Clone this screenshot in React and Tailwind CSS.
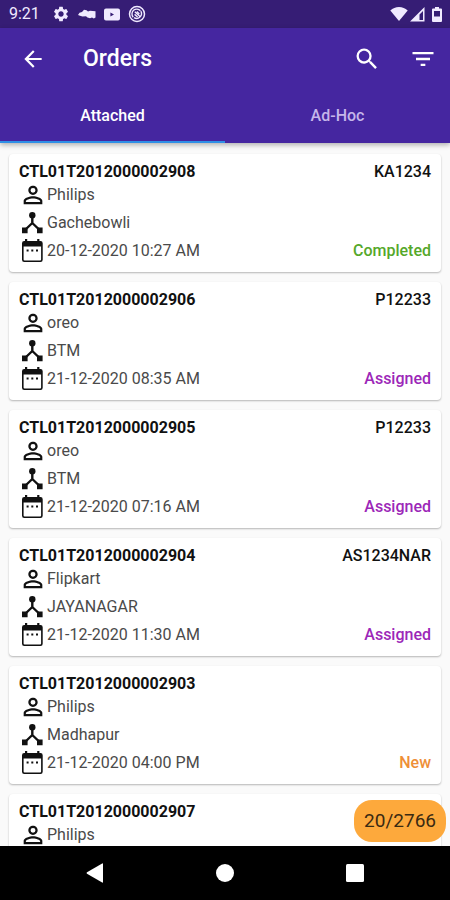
import React, { useState } from "react";
import {
  MdArrowBack,
  MdFilterList,
  MdPersonOutline,
  MdSearch,
  MdSettings,
} from "react-icons/md";

const orders = [
  {
    id: "CTL01T2012000002908",
    vehicle: "KA1234",
    customer: "Philips",
    hub: "Gachebowli",
    date: "20-12-2020 10:27 AM",
    status: "Completed",
  },
  {
    id: "CTL01T2012000002906",
    vehicle: "P12233",
    customer: "oreo",
    hub: "BTM",
    date: "21-12-2020 08:35 AM",
    status: "Assigned",
  },
  {
    id: "CTL01T2012000002905",
    vehicle: "P12233",
    customer: "oreo",
    hub: "BTM",
    date: "21-12-2020 07:16 AM",
    status: "Assigned",
  },
  {
    id: "CTL01T2012000002904",
    vehicle: "AS1234NAR",
    customer: "Flipkart",
    hub: "JAYANAGAR",
    date: "21-12-2020 11:30 AM",
    status: "Assigned",
  },
  {
    id: "CTL01T2012000002903",
    vehicle: "",
    customer: "Philips",
    hub: "Madhapur",
    date: "21-12-2020 04:00 PM",
    status: "New",
  },
  {
    id: "CTL01T2012000002907",
    vehicle: "",
    customer: "Philips",
    hub: "",
    date: "",
    status: "",
  },
];

const statusColors = {
  Completed: "text-[#55a82a]",
  Assigned: "text-[#9c27b8]",
  New: "text-[#ee8f38]",
};

const tabs = ["Attached", "Ad-Hoc"];

const HubIcon = () => (
  <svg viewBox="1 0 28 28" className="size-7 text-[#111]" fill="currentColor">
    <circle cx="14.3" cy="6.3" r="3.2" />
    <path
      d="M14.3 7V14.5M14.3 14L7 21M14.3 14L21.6 21"
      fill="none"
      stroke="currentColor"
      strokeWidth="2.4"
    />
    <path d="M4 18.6H9.6V24.2H4ZM19 18.6H24.6V24.2H19Z" />
  </svg>
);

const CalendarIcon = () => (
  <svg viewBox="1 0 28 28" className="size-7 text-[#111]" fill="currentColor">
    <path
      fillRule="evenodd"
      d="M7 2H9.2V4H19.2V2H21.4V4H22.5Q24.7 4 24.7 6.2V22.8Q24.7 25 22.5 25H6.2Q4 25 4 22.8V6.2Q4 4 6.2 4H7ZM5.6 9.6V22.4Q5.6 23.4 6.6 23.4H22.1Q23.1 23.4 23.1 22.4V9.6Z"
    />
    <path d="M8.6 12.4H10.6V14.4H8.6ZM13.3 12.4H15.3V14.4H13.3ZM18 12.4H20V14.4H18Z" />
  </svg>
);

const StatusBar = () => (
  <div className="flex h-7 shrink-0 items-center justify-between bg-[#361d75] pl-[9px] pr-2 text-[#f0eaff]">
    <div className="flex items-center gap-2">
      <span className="mr-1 text-base">9:21</span>
      <MdSettings className="size-[18px]" />
      <svg viewBox="0 0 18 12" className="h-3 w-[18px]" fill="currentColor">
        <path d="M0 7 1.5 4.8 4 4 6 1.8 8.5 2.2 10 3.6 12 2.8 17.5 3.2V9.6L15.8 10.4 14 9.6 12 10.2 9.5 9.4 8 8.2 4.5 8.6 2 7.8Z" />
      </svg>
      <svg viewBox="0 0 16 13" className="h-[13px] w-4" fill="currentColor">
        <path
          fillRule="evenodd"
          d="M2 0.5H14Q16 0.5 16 2.5V10.5Q16 12.5 14 12.5H2Q0 12.5 0 10.5V2.5Q0 0.5 2 0.5ZM6.4 4.6V8.4L10 6.5Z"
        />
      </svg>
      <svg
        viewBox="0 0 18 18"
        className="size-[18px]"
        fill="none"
        stroke="currentColor"
      >
        <circle cx="9" cy="9" r="7.5" strokeWidth="1.5" />
        <path
          d="M5.2 12.2A4.8 4.8 0 0 1 12.4 5.7M12.8 6.2A4.8 4.8 0 0 1 6 12.6M6.8 6.8 12 11.4M6.6 9.4 9.6 12M8.8 6.6 11.4 9"
          strokeWidth="1.4"
        />
      </svg>
    </div>
    <div className="flex items-center gap-[2px]">
      <svg viewBox="0 0 18 14" className="h-[14px] w-[18px]" fill="currentColor">
        <path d="M0.3 3.5Q4 0 9 0T17.7 3.5L9 14Z" />
      </svg>
      <svg viewBox="0 0 15 15" className="size-[15px]" fill="currentColor">
        <path fillRule="evenodd" d="M14.5 0V14.5H0ZM13 4V13H9.5V7.5Z" />
      </svg>
      <svg viewBox="0 0 10 15" className="ml-[5px] h-[15px] w-[10px]">
        <path
          fill="currentColor"
          fillRule="evenodd"
          d="M3 0H7V1.5H9Q10 1.5 10 2.5V14Q10 15 9 15H1Q0 15 0 14V2.5Q0 1.5 1 1.5H3ZM2 4V9.5H8V4Z"
        />
      </svg>
    </div>
  </div>
);

const OrderCard = ({ order }) => (
  <li className="rounded bg-white px-[10px] pb-[7px] pt-2 shadow-[0_1px_2px_rgba(0,0,0,0.28)]">
    <div className="flex justify-between text-base font-medium leading-[19px] text-[#111]">
      <h2 className="font-bold">{order.id}</h2>
      <span>{order.vehicle}</span>
    </div>
    <div className="flex h-7 items-center">
      <MdPersonOutline className="size-7 text-[#111]" />
      <span>{order.customer}</span>
    </div>
    <div className="flex h-7 items-center">
      <HubIcon />
      <span>{order.hub}</span>
    </div>
    <div className="flex h-7 items-center">
      <CalendarIcon />
      <span>{order.date}</span>
      <span className={`ml-auto font-medium ${statusColors[order.status]}`}>
        {order.status}
      </span>
    </div>
  </li>
);

const App = () => {
  const [activeTab, setActiveTab] = useState("Attached");

  return (
    <div className="flex h-screen flex-col bg-[#fafafa] font-['Roboto',sans-serif]">
      <StatusBar />

      {/* App bar & tabs */}
      <header className="z-10 shrink-0 bg-[#4526a0] text-white shadow-[0_2px_5px_rgba(0,0,0,0.3)]">
        <div className="flex h-[62px] items-center pl-5 pr-[13px]">
          <button type="button" aria-label="Back">
            <MdArrowBack className="size-[26px]" />
          </button>
          <h1 className="ml-[37px] text-[23px] font-medium leading-7">
            Orders
          </h1>
          <button type="button" aria-label="Search" className="ml-auto">
            <MdSearch className="size-7" />
          </button>
          <button type="button" aria-label="Filter" className="ml-7">
            <MdFilterList className="size-7" />
          </button>
        </div>
        <div role="tablist" className="flex">
          {tabs.map((tab) => (
            <button
              key={tab}
              type="button"
              role="tab"
              aria-selected={tab === activeTab}
              onClick={() => setActiveTab(tab)}
              className={`h-[53px] flex-1 border-b-2 text-base font-medium ${
                tab === activeTab
                  ? "border-[#2f8fe6] text-white"
                  : "border-transparent text-[#c5b6ea]"
              }`}
            >
              {tab}
            </button>
          ))}
        </div>
      </header>

      {/* Orders list */}
      <main className="relative min-h-0 flex-1">
        <ul className="flex h-full flex-col gap-[10px] overflow-hidden px-[9px] pt-[11px] text-base text-[#4a4a4a]">
          {orders.map((order) => (
            <OrderCard key={order.id} order={order} />
          ))}
        </ul>
        <span className="absolute bottom-1 right-1 rounded-[18px] bg-[#fda93c] px-[10px] py-[7px] text-[19px] leading-7 text-[#3a2a12]">
          20/2766
        </span>
      </main>

      {/* System navigation */}
      <nav className="flex h-[54px] shrink-0 items-center justify-center gap-[106px] bg-black text-white">
        <button type="button" aria-label="System back">
          <svg viewBox="0 0 24 24" className="size-6" fill="currentColor">
            <path d="M4 11.2 19.2 2.4Q20 2 20 3V21Q20 22 19.2 21.6L4 12.8Q3 12 4 11.2Z" />
          </svg>
        </button>
        <button type="button" aria-label="Home">
          <svg viewBox="0 0 24 24" className="size-6" fill="currentColor">
            <circle cx="12" cy="12" r="9" />
          </svg>
        </button>
        <button type="button" aria-label="Recent apps">
          <svg viewBox="0 0 24 24" className="size-6" fill="currentColor">
            <rect x="3" y="3" width="18" height="18" rx="1.5" />
          </svg>
        </button>
      </nav>
    </div>
  );
};

export default App;
